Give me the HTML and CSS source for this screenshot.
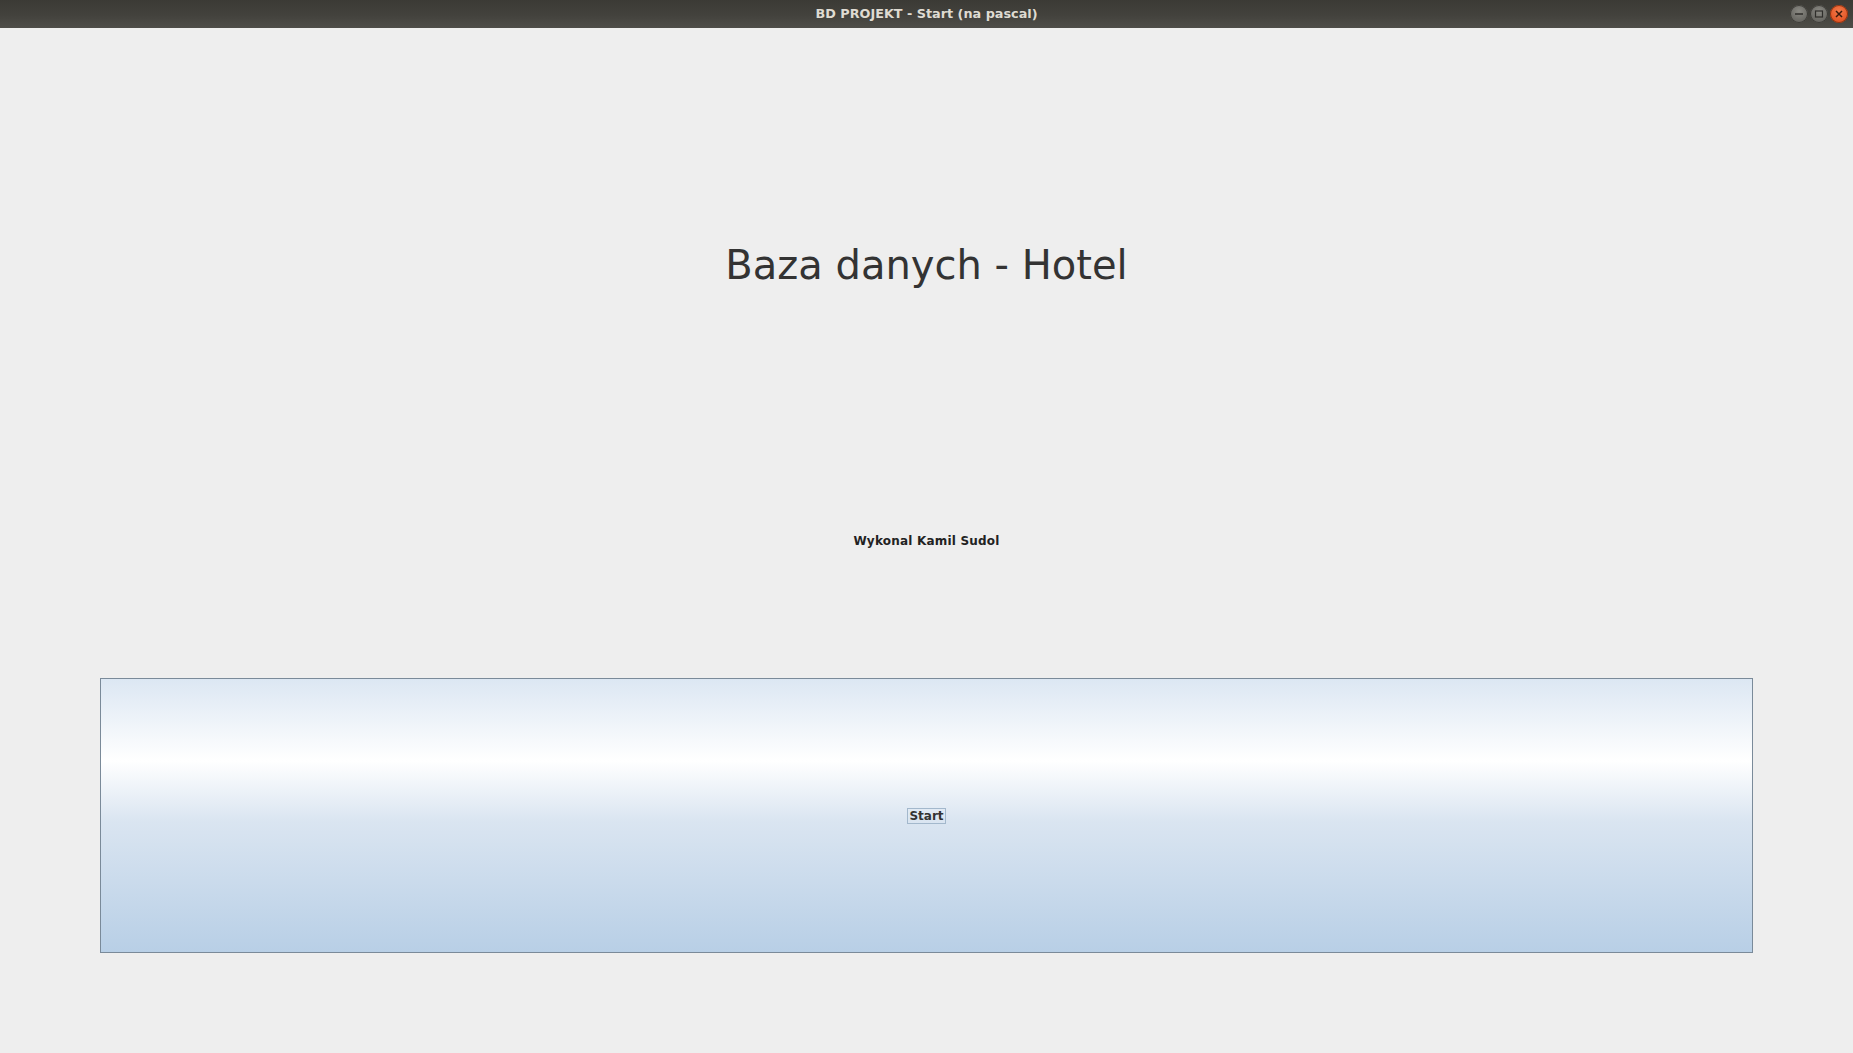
FILE: index.html
```html
<!DOCTYPE html>
<html lang="pl">
<head>
<meta charset="utf-8">
<title>BD PROJEKT - Start (na pascal)</title>
<link rel="stylesheet" href="styles.css">
</head>
<body>
<div class="window">
  <header class="titlebar">
    <span class="title">BD PROJEKT - Start (na pascal)</span>
    <div class="controls">
      <span class="ctl ctl-min"><svg width="18" height="18" viewBox="0 0 18 18"><line x1="5" y1="9" x2="13" y2="9" stroke="#2f2e2b" stroke-width="1.5"/></svg></span>
      <span class="ctl ctl-max"><svg width="18" height="18" viewBox="0 0 18 18"><rect x="5.5" y="6" width="7" height="6" fill="none" stroke="#2f2e2b" stroke-width="1.2"/></svg></span>
      <span class="ctl ctl-close"><svg width="18" height="18" viewBox="0 0 18 18"><path d="M6 6 L12 12 M12 6 L6 12" stroke="#3a1a0c" stroke-width="1.5"/></svg></span>
    </div>
  </header>
  <main class="content">
    <h1 class="heading">Baza danych - Hotel</h1>
    <p class="author">Wykonal Kamil Sudol</p>
    <button class="start-btn" type="button"><span class="start-label">Start</span></button>
  </main>
</div>
</body>
</html>
```
FILE: styles.css
```css
html, body {
  margin: 0;
  padding: 0;
  height: 100%;
}
body {
  background: #eeeeee;
  font-family: "DejaVu Sans", "Liberation Sans", sans-serif;
}
.window {
  display: flex;
  flex-direction: column;
  height: 1053px;
}
.titlebar {
  height: 28px;
  flex: none;
  position: relative;
  display: flex;
  align-items: center;
  justify-content: center;
  background: linear-gradient(to bottom, #3b3a35 0%, #42413c 50%, #4e4d48 100%);
}
.title {
  color: #dfdbd2;
  font-family: "DejaVu Sans", sans-serif;
  font-weight: bold;
  font-size: 12.8px;
  line-height: 28px;
}
.controls {
  position: absolute;
  right: 5px;
  top: 5px;
  display: flex;
  gap: 2px;
}
.ctl {
  width: 18px;
  height: 18px;
  border-radius: 50%;
  display: flex;
}
.ctl-min, .ctl-max {
  background: radial-gradient(circle at 50% 35%, #8a8983 0%, #6c6b66 60%, #5a5955 100%);
  box-shadow: inset 0 0 0 1px #3d3c38;
}
.ctl-close {
  background: radial-gradient(circle at 50% 35%, #f27a4a 0%, #e65a2a 60%, #d0481c 100%);
  box-shadow: inset 0 0 0 1px #8c3412;
}
.content {
  flex: 1;
  display: flex;
  flex-direction: column;
  align-items: center;
  padding: 213px 100px 0 100px;
}
.heading {
  margin: 0;
  font-weight: normal;
  font-size: 40px;
  line-height: 48px;
  color: #333333;
}
.author {
  margin: 244px 0 0 0;
  font-weight: bold;
  font-size: 12px;
  line-height: 16px;
  letter-spacing: 0.2px;
  color: #222222;
}
.start-btn {
  margin-top: 129px;
  width: 1653px;
  height: 275px;
  border: 1px solid #7a8a99;
  padding: 0;
  background: linear-gradient(to bottom, #dce7f3 0%, #ffffff 30%, #dae5f1 52%, #b8cfe6 100%);
  display: flex;
  align-items: center;
  justify-content: center;
  font-family: "DejaVu Sans", sans-serif;
  cursor: default;
}
.start-label {
  display: block;
  font-weight: bold;
  font-size: 12px;
  line-height: 14px;
  color: #333333;
  padding: 0 1px;
  border: 1px solid #a3b8cc;
}
```
